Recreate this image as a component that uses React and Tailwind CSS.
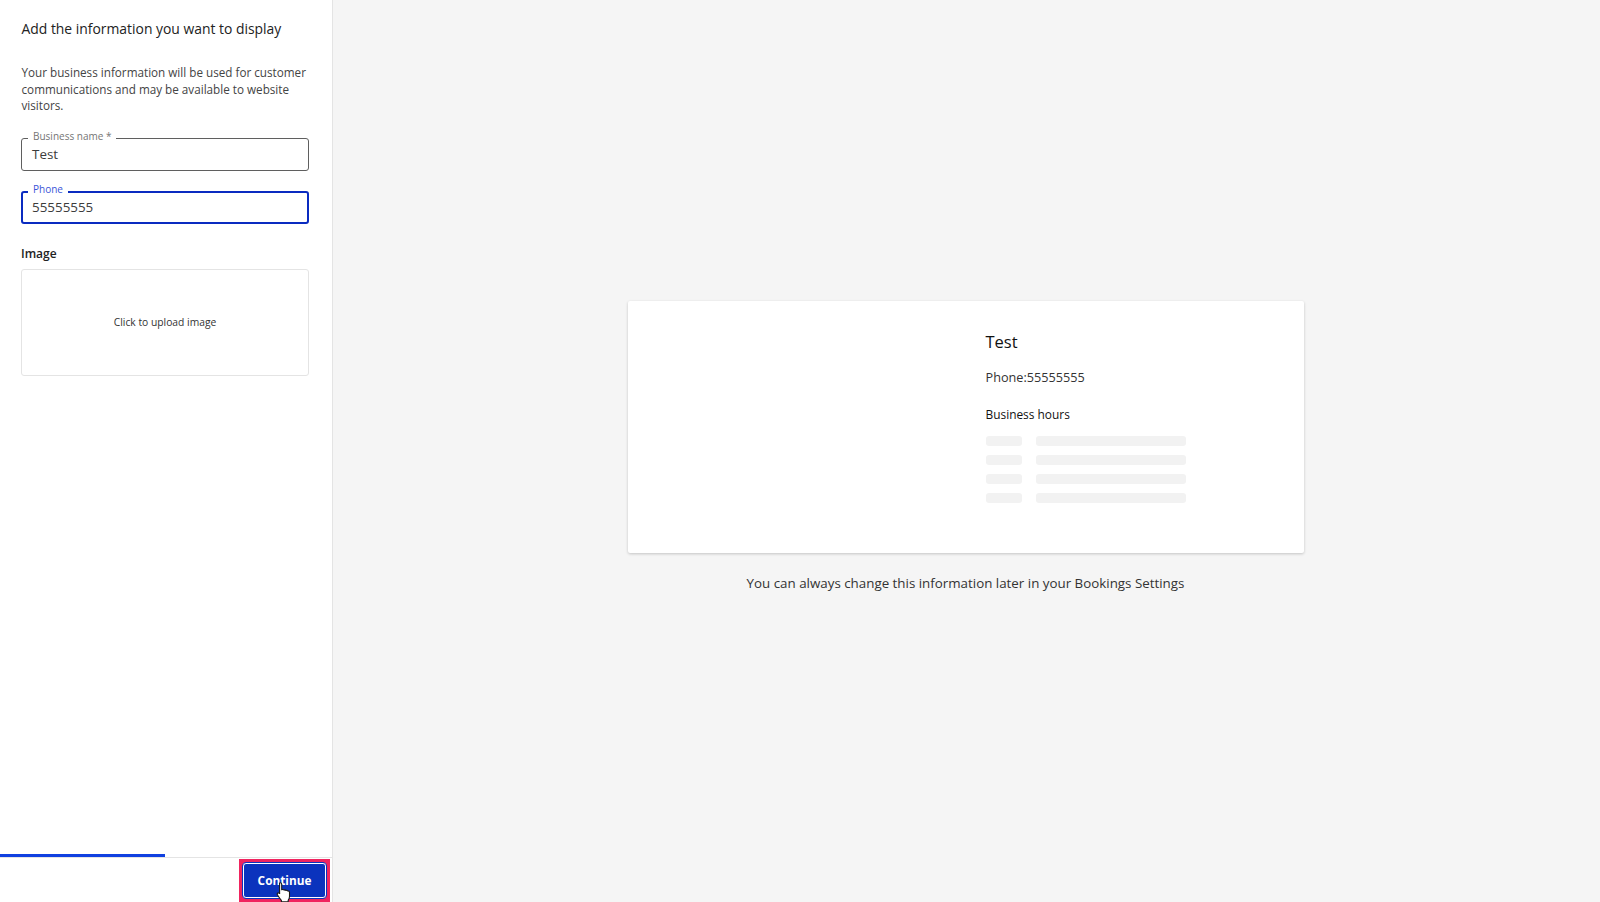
const FONT = "font-['Open_Sans',sans-serif]";

const OutlinedField = ({ label, value, focused }) => (
  <div className={`relative h-[33px] rounded-[3px] border px-[10px] ${focused ? 'border-2 border-[#0a2bc0]' : 'border-[#5f5f5f]'}`}>
    <span className={`absolute left-[6px] bg-white px-[5px] text-[10px] leading-[16px] ${focused ? '-top-[12px] -ml-px text-[#3a55d8]' : '-top-[11px] text-[#757575]'}`}>
      {label}
    </span>
    <div className={`text-[13.4px] text-[#3c3c3c] ${focused ? '-ml-px leading-[28px]' : 'leading-[31px]'}`}>{value}</div>
  </div>
);

const HoursRow = () => (
  <div className="flex gap-[14px]">
    <div className="h-[10px] w-[36px] rounded-[3px] bg-[#f2f2f2]" />
    <div className="h-[10px] w-[150px] rounded-[3px] bg-[#f2f2f2]" />
  </div>
);

const Cursor = () => (
  <svg className="absolute left-[32px] top-[18px]" width="18" height="22" viewBox="0 0 16 20">
    <path
      d="M4.5 1.6c.8 0 1.4.6 1.4 1.4v5l1-.2c.6-.1 1 .1 1.3.5.6-.3 1.2-.2 1.6.3.6-.3 1.3-.1 1.6.5.9-.2 1.6.4 1.6 1.3v3.6c0 1.5-.5 2.4-1.2 3.6v1.4H5.6v-1.4c-.9-1-2-2.6-3.5-4.9-.5-.8-.3-1.5.3-1.8.6-.3 1.2-.1 1.7.5l-.1-.1V3c0-.8-.3-1.4.5-1.4z"
      fill="#fff"
      stroke="#1a1a1a"
      strokeWidth="1"
      strokeLinejoin="round"
    />
  </svg>
);

export default function App() {
  return (
    <div className={`flex h-[902px] w-[1600px] overflow-hidden bg-[#f5f5f5] ${FONT}`}>
      {/* Left panel */}
      <aside className="flex w-[333px] shrink-0 flex-col border-r border-[#e4e4e4] bg-white">
        <div className="flex-1 px-[21px] pt-[19px]">
          <h1 className="ml-[0.5px] text-[13.9px] font-medium leading-[20px] text-[#222]">Add the information you want to display</h1>
          <p className="mt-[25px] ml-[0.5px] w-[292px] text-[11.7px] leading-[16.5px] text-[#444]">
            Your business information will be used for customer communications and may be available to website visitors.
          </p>
          <div className="mt-[24px] w-[288px] space-y-[20px]">
            <OutlinedField label="Business name *" value="Test" />
            <OutlinedField label="Phone" value="55555555" focused />
          </div>
          <div className="mt-[20px] text-[12px] font-semibold leading-[20px] text-[#222]">Image</div>
          <div className="mt-[5px] flex h-[107px] w-[288px] items-center justify-center rounded-[3px] border border-[#e4e4e4] pt-[2px] text-[10.3px] font-medium text-[#333]">
            Click to upload image
          </div>
        </div>

        {/* Progress and footer */}
        <div className="h-[3px] w-[165px] bg-[#1040e0]" />
        <div className="flex h-[45px] justify-end border-t border-[#e4e4e4] pr-[2px] pt-[1px]">
          <div className="relative h-[43px] w-[91px] border-[4px] border-[#f0245f]">
            <button className="h-full w-full rounded-[3px] border border-white bg-[#0b33bd] pt-px text-[11.8px] font-bold text-white outline outline-1 outline-[#0b33bd]">
              Continue
            </button>
            <Cursor />
          </div>
        </div>
      </aside>

      {/* Preview */}
      <main className="flex flex-1 flex-col items-center justify-center pb-[8px] pr-[2px]">
        <div className="h-[252px] w-[676px] rounded-[2px] bg-white pl-[358px] pt-[29px] shadow-[0_1px_3px_rgba(0,0,0,0.2)]">
          <div className="text-[16.5px] font-medium leading-[24px] text-[#111]">Test</div>
          <div className="mt-[12px] text-[12.7px] leading-[22px] text-[#333]">Phone:55555555</div>
          <div className="mt-[17px] text-[11.9px] font-medium leading-[18px] text-[#111]">Business hours</div>
          <div className="mt-[13px] space-y-[9px]">
            <HoursRow />
            <HoursRow />
            <HoursRow />
            <HoursRow />
          </div>
        </div>
        <p className="mt-[20px] text-[13.35px] leading-[20px] text-[#333]">You can always change this information later in your Bookings Settings</p>
      </main>
    </div>
  );
}
